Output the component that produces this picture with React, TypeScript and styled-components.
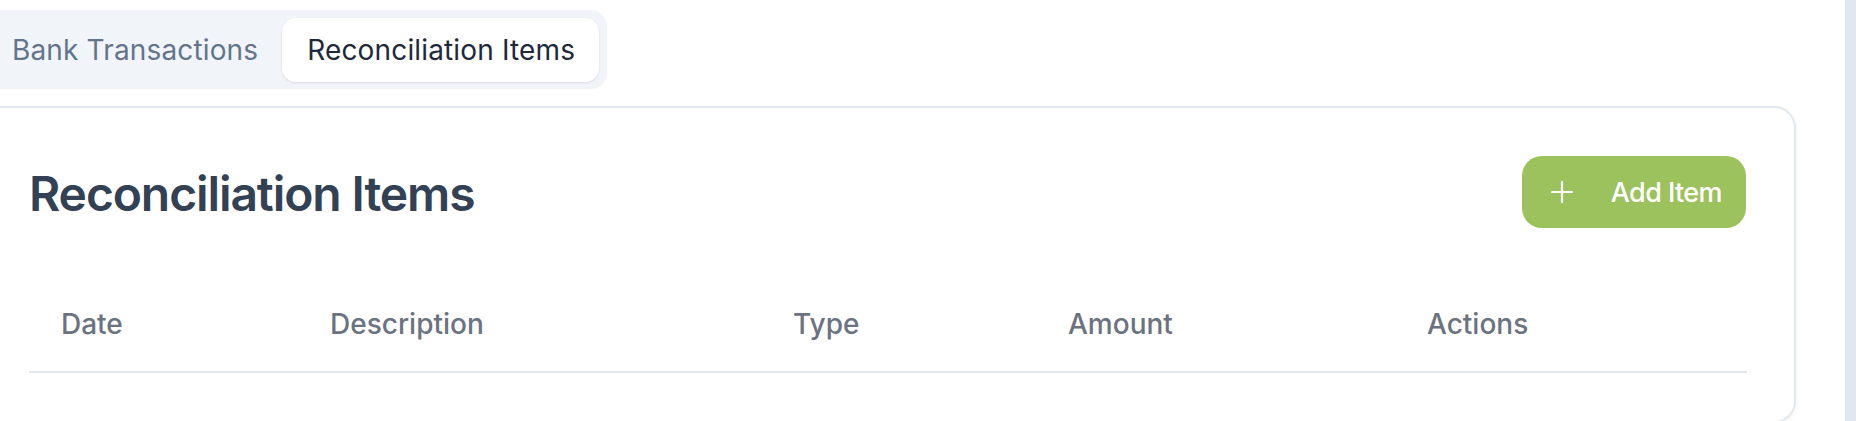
import React from "react";
import styled, { createGlobalStyle } from "styled-components";

const GlobalStyle = createGlobalStyle`
  html, body {
    margin: 0;
    padding: 0;
    background: #ffffff;
    overflow: hidden;
  }
  body {
    font-family: Inter, "Noto Sans", "Liberation Sans", sans-serif;
    -webkit-font-smoothing: antialiased;
  }
`;

const Page = styled.div`
  display: flex;
  height: 421px;
  width: 1856px;
  overflow: hidden;
`;

const Main = styled.main`
  flex: 1;
  display: flex;
  flex-direction: column;
  align-items: flex-start;
  gap: 17px;
  margin-left: -21px;
  padding: 10px 49px 0 0;
  min-width: 0;
`;

const ScrollTrack = styled.div`
  width: 11px;
  flex: none;
  background: #e2e6f0;
`;

const TabList = styled.div`
  display: flex;
  align-items: center;
  padding: 8px 8px 7px 8px;
  background: #f1f5f9;
  border-radius: 16px;
`;

const Tab = styled.button<{ $active?: boolean }>`
  height: 64px;
  padding: 0 24px 0 25px;
  border: none;
  border-radius: 14px;
  font-family: inherit;
  font-size: 28px;
  font-weight: 400;
  letter-spacing: 0.15px;
  line-height: 1;
  cursor: pointer;
  color: ${(p) => (p.$active ? "#1e293b" : "#64748b")};
  background: ${(p) => (p.$active ? "#ffffff" : "transparent")};
  box-shadow: ${(p) =>
    p.$active ? "0 1px 3px rgba(15, 23, 42, 0.08), 0 1px 2px rgba(15, 23, 42, 0.04)" : "none"};
`;

const Card = styled.section`
  align-self: stretch;
  background: #ffffff;
  border: 2px solid #e2e8f0;
  border-radius: 22px;
  padding: 48px 48px 48px 48px;
  box-shadow: 0 2px 4px rgba(15, 23, 42, 0.06);
`;

const CardHeader = styled.div`
  display: flex;
  align-items: center;
  justify-content: space-between;
  margin-bottom: 49px;
`;

const Title = styled.h2`
  margin: 0;
  padding-top: 3px;
  font-size: 48px;
  font-weight: 600;
  letter-spacing: -1.1px;
  color: #334155;
  line-height: 1.2;
`;

const AddButton = styled.button`
  display: flex;
  align-items: center;
  gap: 38px;
  height: 72px;
  padding: 0 24px 0 29px;
  border: none;
  border-radius: 20px;
  background: #9cc25d;
  color: #ffffff;
  font-family: inherit;
  font-size: 27px;
  font-weight: 500;
  letter-spacing: -0.6px;
  cursor: pointer;
`;

const Table = styled.table`
  width: 100%;
  border-collapse: collapse;
  table-layout: fixed;
`;

const HeadCell = styled.th`
  text-align: left;
  padding: 33px 32px;
  font-size: 28px;
  line-height: 28px;
  font-weight: 500;
  color: #6b7280;
  border-bottom: 2px solid #e2e8f0;
`;

const PlusIcon = () => (
  <svg width="22" height="22" viewBox="0 0 22 22" fill="none" aria-hidden="true">
    <path d="M11 1v20M1 11h20" stroke="#ffffff" strokeWidth="2.2" strokeLinecap="round" />
  </svg>
);

const columns = [
  { label: "Date", width: 269 },
  { label: "Description", width: 463 },
  { label: "Type", width: 275 },
  { label: "Amount", width: 359 },
  { label: "Actions", width: 352 },
];

export default function App() {
  return (
    <>
      <GlobalStyle />
      <Page>
        <Main>
          <TabList>
            <Tab>Bank Transactions</Tab>
            <Tab $active>Reconciliation Items</Tab>
          </TabList>
          <Card>
            <CardHeader>
              <Title>Reconciliation Items</Title>
              <AddButton>
                <PlusIcon />
                Add Item
              </AddButton>
            </CardHeader>
            <Table>
              <colgroup>
                {columns.map((c) => (
                  <col key={c.label} style={{ width: c.width }} />
                ))}
              </colgroup>
              <thead>
                <tr>
                  {columns.map((c) => (
                    <HeadCell key={c.label}>{c.label}</HeadCell>
                  ))}
                </tr>
              </thead>
            </Table>
          </Card>
        </Main>
        <ScrollTrack />
      </Page>
    </>
  );
}
